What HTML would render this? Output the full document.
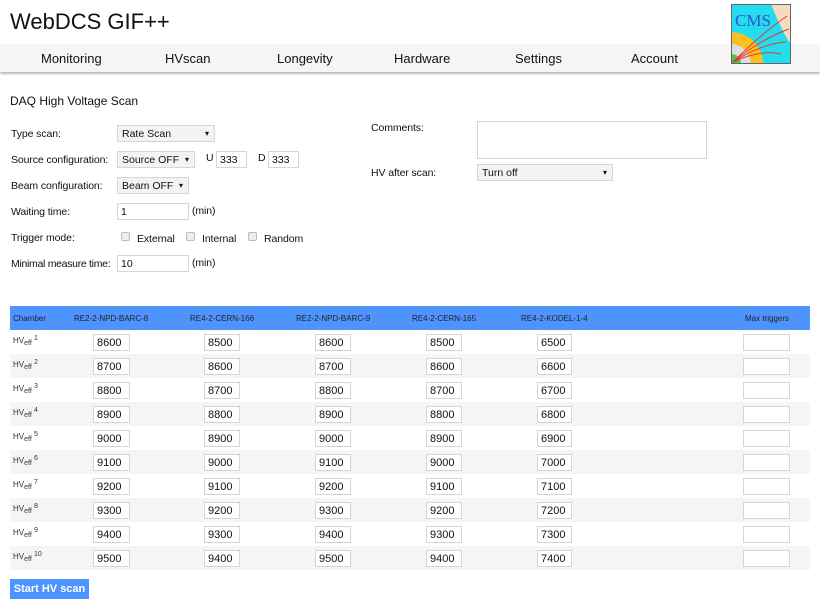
<!DOCTYPE html>
<html><head><meta charset="utf-8"><style>
*{box-sizing:border-box}
body{margin:0;width:820px;height:614px;background:#fff;font-family:"Liberation Sans",sans-serif;color:#111;position:relative;overflow:hidden}
.a{position:absolute}
.t{font-size:10.5px;letter-spacing:-0.1px}
.sel{position:absolute;background:#f3f3f3;border:1px solid #d5d5d5;font-size:10.5px;padding:2px 4px;height:17px;line-height:12px}
.sel:after{content:"▾";position:absolute;right:5px;top:2px;font-size:8px}
.inp{position:absolute;border:1px solid #d5d5d5;background:#fff;font-size:10.5px;padding:2px 3px;height:17px;line-height:12px}
.cb{position:absolute;width:9px;height:9px;border:1px solid #bbb;border-radius:2px;background:#eee}
.row{position:absolute;left:10px;width:800px;height:24px}
.lab{position:absolute;left:3px;top:5px;font-size:8px;color:#333}
.lab sub{font-size:7px;vertical-align:-2px}.lab sup{font-size:7px;vertical-align:3px}
.c{position:absolute;top:4px;height:17px;border:1px solid #d5d5d5;background:#fff;font-size:11px;padding:2px 3px;line-height:12px}
.th{position:absolute;top:8px;font-size:8px;color:#222}
</style></head><body>
<div class="a" style="left:10px;top:9px;font-size:22px">WebDCS GIF++</div>
<div class="a" style="left:0;top:44px;width:820px;height:28px;background:#f5f5f5;box-shadow:0 2px 2px #bbb"></div>
<div class="a" style="top:51px;font-size:13px;left:0;width:820px">
<span class="a" style="left:41px">Monitoring</span><span class="a" style="left:165px">HVscan</span><span class="a" style="left:277px">Longevity</span><span class="a" style="left:394px">Hardware</span><span class="a" style="left:515px">Settings</span><span class="a" style="left:631px">Account</span></div>
<svg class="a" style="left:731px;top:4px" width="60" height="60" viewBox="0 0 60 60">
<rect width="60" height="60" fill="#f5dcc0"/><path d="M0 0H40Q52 30 60 40V60H0Z" fill="#22ddee"/>
<path d="M0 28A32 32 0 0 1 32 60H20A20 20 0 0 0 0 40Z" fill="#f8c020"/>
<path d="M0 40A20 20 0 0 1 20 60H10A10 10 0 0 0 0 50Z" fill="#ddd"/>
<path d="M0 50A10 10 0 0 1 10 60H0Z" fill="#4c4"/>
<g stroke="#e33" fill="none" stroke-width="1"><path d="M2 58Q30 30 56 12"/><path d="M2 58Q30 35 58 25"/><path d="M2 58Q30 40 55 38"/><path d="M2 58Q30 45 50 50"/></g>
<text x="4" y="22" font-family="Liberation Serif" font-size="17" fill="#3355cc">CMS</text>
<rect x="0.5" y="0.5" width="59" height="59" fill="none" stroke="#666"/></svg>
<div class="a" style="left:10px;top:94px;font-size:12px">DAQ High Voltage Scan</div>

<div class="a t" style="left:11px;top:128px">Type scan:</div>
<div class="sel" style="left:117px;top:125px;width:98px">Rate Scan</div>
<div class="a t" style="left:11px;top:154px">Source configuration:</div>
<div class="sel" style="left:117px;top:151px;width:78px">Source OFF</div>
<div class="a t" style="left:206px;top:152px">U</div><div class="inp" style="left:216px;top:151px;width:31px">333</div>
<div class="a t" style="left:258px;top:152px">D</div><div class="inp" style="left:268px;top:151px;width:31px">333</div>
<div class="a t" style="left:11px;top:180px">Beam configuration:</div>
<div class="sel" style="left:117px;top:177px;width:72px">Beam OFF</div>
<div class="a t" style="left:11px;top:206px">Waiting time:</div>
<div class="inp" style="left:117px;top:203px;width:72px">1</div><div class="a t" style="left:192px;top:205px">(min)</div>
<div class="a t" style="left:11px;top:232px">Trigger mode:</div>
<div class="cb" style="left:121px;top:232px"></div><div class="a t" style="left:137px;top:233px">External</div>
<div class="cb" style="left:186px;top:232px"></div><div class="a t" style="left:202px;top:233px">Internal</div>
<div class="cb" style="left:248px;top:232px"></div><div class="a t" style="left:264px;top:233px">Random</div>
<div class="a t" style="left:11px;top:258px;letter-spacing:-0.3px">Minimal measure time:</div>
<div class="inp" style="left:117px;top:255px;width:72px">10</div><div class="a t" style="left:192px;top:257px">(min)</div>

<div class="a t" style="left:371px;top:122px">Comments:</div>
<div class="a" style="left:477px;top:121px;width:230px;height:38px;border:1px solid #d5d5d5"></div>
<div class="a t" style="left:371px;top:167px">HV after scan:</div>
<div class="sel" style="left:477px;top:164px;width:136px">Turn off</div>

<div class="a" style="left:10px;top:306px;width:800px;height:24px;background:#4d94ff">
<span class="th" style="left:3px">Chamber</span><span class="th" style="left:64px">RE2-2-NPD-BARC-8</span><span class="th" style="left:180px">RE4-2-CERN-166</span><span class="th" style="left:286px">RE2-2-NPD-BARC-9</span><span class="th" style="left:402px">RE4-2-CERN-165</span><span class="th" style="left:511px">RE4-2-KODEL-1-4</span><span class="th" style="left:735px">Max triggers</span></div>

<div class="row" style="top:330px"><span class="lab">HV<sub>eff</sub> <sup>1</sup></span><div class="c" style="left:83px;width:37px">8600</div><div class="c" style="left:194px;width:36px">8500</div><div class="c" style="left:305px;width:36px">8600</div><div class="c" style="left:416px;width:36px">8500</div><div class="c" style="left:527px;width:35px">6500</div><div class="c" style="left:733px;width:47px"></div></div>
<div class="row" style="top:354px;background:#f5f5f5"><span class="lab">HV<sub>eff</sub> <sup>2</sup></span><div class="c" style="left:83px;width:37px">8700</div><div class="c" style="left:194px;width:36px">8600</div><div class="c" style="left:305px;width:36px">8700</div><div class="c" style="left:416px;width:36px">8600</div><div class="c" style="left:527px;width:35px">6600</div><div class="c" style="left:733px;width:47px"></div></div>
<div class="row" style="top:378px"><span class="lab">HV<sub>eff</sub> <sup>3</sup></span><div class="c" style="left:83px;width:37px">8800</div><div class="c" style="left:194px;width:36px">8700</div><div class="c" style="left:305px;width:36px">8800</div><div class="c" style="left:416px;width:36px">8700</div><div class="c" style="left:527px;width:35px">6700</div><div class="c" style="left:733px;width:47px"></div></div>
<div class="row" style="top:402px;background:#f5f5f5"><span class="lab">HV<sub>eff</sub> <sup>4</sup></span><div class="c" style="left:83px;width:37px">8900</div><div class="c" style="left:194px;width:36px">8800</div><div class="c" style="left:305px;width:36px">8900</div><div class="c" style="left:416px;width:36px">8800</div><div class="c" style="left:527px;width:35px">6800</div><div class="c" style="left:733px;width:47px"></div></div>
<div class="row" style="top:426px"><span class="lab">HV<sub>eff</sub> <sup>5</sup></span><div class="c" style="left:83px;width:37px">9000</div><div class="c" style="left:194px;width:36px">8900</div><div class="c" style="left:305px;width:36px">9000</div><div class="c" style="left:416px;width:36px">8900</div><div class="c" style="left:527px;width:35px">6900</div><div class="c" style="left:733px;width:47px"></div></div>
<div class="row" style="top:450px;background:#f5f5f5"><span class="lab">HV<sub>eff</sub> <sup>6</sup></span><div class="c" style="left:83px;width:37px">9100</div><div class="c" style="left:194px;width:36px">9000</div><div class="c" style="left:305px;width:36px">9100</div><div class="c" style="left:416px;width:36px">9000</div><div class="c" style="left:527px;width:35px">7000</div><div class="c" style="left:733px;width:47px"></div></div>
<div class="row" style="top:474px"><span class="lab">HV<sub>eff</sub> <sup>7</sup></span><div class="c" style="left:83px;width:37px">9200</div><div class="c" style="left:194px;width:36px">9100</div><div class="c" style="left:305px;width:36px">9200</div><div class="c" style="left:416px;width:36px">9100</div><div class="c" style="left:527px;width:35px">7100</div><div class="c" style="left:733px;width:47px"></div></div>
<div class="row" style="top:498px;background:#f5f5f5"><span class="lab">HV<sub>eff</sub> <sup>8</sup></span><div class="c" style="left:83px;width:37px">9300</div><div class="c" style="left:194px;width:36px">9200</div><div class="c" style="left:305px;width:36px">9300</div><div class="c" style="left:416px;width:36px">9200</div><div class="c" style="left:527px;width:35px">7200</div><div class="c" style="left:733px;width:47px"></div></div>
<div class="row" style="top:522px"><span class="lab">HV<sub>eff</sub> <sup>9</sup></span><div class="c" style="left:83px;width:37px">9400</div><div class="c" style="left:194px;width:36px">9300</div><div class="c" style="left:305px;width:36px">9400</div><div class="c" style="left:416px;width:36px">9300</div><div class="c" style="left:527px;width:35px">7300</div><div class="c" style="left:733px;width:47px"></div></div>
<div class="row" style="top:546px;background:#f5f5f5"><span class="lab">HV<sub>eff</sub> <sup>10</sup></span><div class="c" style="left:83px;width:37px">9500</div><div class="c" style="left:194px;width:36px">9400</div><div class="c" style="left:305px;width:36px">9500</div><div class="c" style="left:416px;width:36px">9400</div><div class="c" style="left:527px;width:35px">7400</div><div class="c" style="left:733px;width:47px"></div></div>

<div class="a" style="left:10px;top:579px;width:79px;height:20px;background:#4d94ff;color:#fff;font-weight:bold;font-size:11px;line-height:20px;text-align:center">Start HV scan</div>
</body></html>
